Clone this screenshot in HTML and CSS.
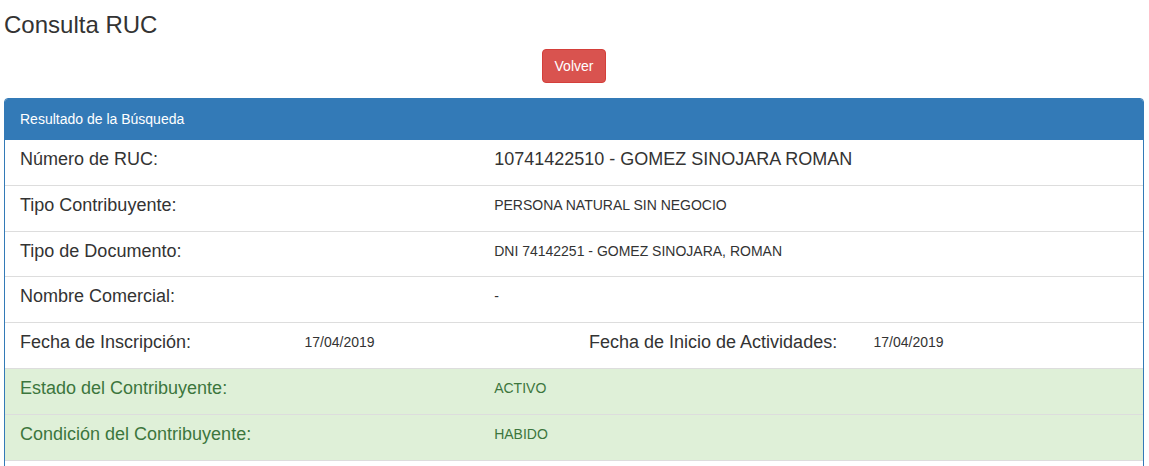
FILE: index.html
```html
<!DOCTYPE html>
<html lang="es">
<head>
<meta charset="utf-8">
<title>Consulta RUC</title>
<link rel="stylesheet" href="styles.css">
</head>
<body>
<div class="page">
  <h3 class="title">Consulta RUC</h3>
  <div class="actions">
    <button class="btn btn-danger" type="button">Volver</button>
  </div>
  <div class="panel">
    <div class="panel-heading">Resultado de la Búsqueda</div>
    <div class="list">
      <div class="item">
        <h4 class="label">Número de RUC:</h4>
        <h4 class="label">10741422510 - GOMEZ SINOJARA ROMAN</h4>
      </div>
      <div class="item">
        <h4 class="label">Tipo Contribuyente:</h4>
        <p class="value">PERSONA NATURAL SIN NEGOCIO</p>
      </div>
      <div class="item">
        <h4 class="label">Tipo de Documento:</h4>
        <p class="value">DNI 74142251 - GOMEZ SINOJARA, ROMAN</p>
      </div>
      <div class="item">
        <h4 class="label">Nombre Comercial:</h4>
        <p class="value">-</p>
      </div>
      <div class="item item-4">
        <h4 class="label">Fecha de Inscripción:</h4>
        <p class="value">17/04/2019</p>
        <h4 class="label">Fecha de Inicio de Actividades:</h4>
        <p class="value">17/04/2019</p>
      </div>
      <div class="item item-success">
        <h4 class="label">Estado del Contribuyente:</h4>
        <p class="value">ACTIVO</p>
      </div>
      <div class="item item-success">
        <h4 class="label">Condición del Contribuyente:</h4>
        <p class="value">HABIDO</p>
      </div>
    </div>
  </div>
</div>
</body>
</html>
```

FILE: styles.css
```css
* { box-sizing: border-box; }

html, body {
  margin: 0;
  padding: 0;
  background: #fff;
}

body {
  font-family: "Liberation Sans", Arial, Helvetica, sans-serif;
  font-size: 14px;
  line-height: 1.42857;
  color: #333;
}

.page {
  padding: 0 5px 0 4px;
}

.title {
  margin: 12px 0 11px;
  font-size: 24px;
  font-weight: 400;
  line-height: 26px;
  color: #333;
}

.actions {
  text-align: center;
  margin-bottom: 15px;
}

.btn {
  display: inline-block;
  padding: 6px 12px;
  font-family: inherit;
  font-size: 14px;
  line-height: 20px;
  border: 1px solid transparent;
  border-radius: 4px;
  cursor: pointer;
}

.btn-danger {
  color: #fff;
  background-color: #d9534f;
  border-color: #d43f3a;
}

.panel {
  border: 1px solid #337ab7;
  border-radius: 4px;
  background: #fff;
  overflow: hidden;
}

.panel-heading {
  padding: 10px 15px;
  color: #fff;
  background-color: #337ab7;
  border-bottom: 1px solid #337ab7;
  font-size: 14px;
  line-height: 20px;
}

.list {
  padding-bottom: 40px;
}

.item {
  display: grid;
  grid-template-columns: 5fr 7fr;
  align-items: start;
  padding: 10px 0;
  border-bottom: 1px solid #ddd;
  background: #fff;
}

.item-4 {
  grid-template-columns: 1fr 1fr 1fr 1fr;
}

.item-success {
  background-color: #dff0d8;
  color: #3c763d;
}

.label {
  margin: 0 0 5px;
  padding: 0 15px;
  font-size: 18px;
  font-weight: 400;
  line-height: 1.1;
}

.value {
  margin: 0;
  padding: 0 15px;
  font-size: 14px;
  line-height: 1.3;
}
```
